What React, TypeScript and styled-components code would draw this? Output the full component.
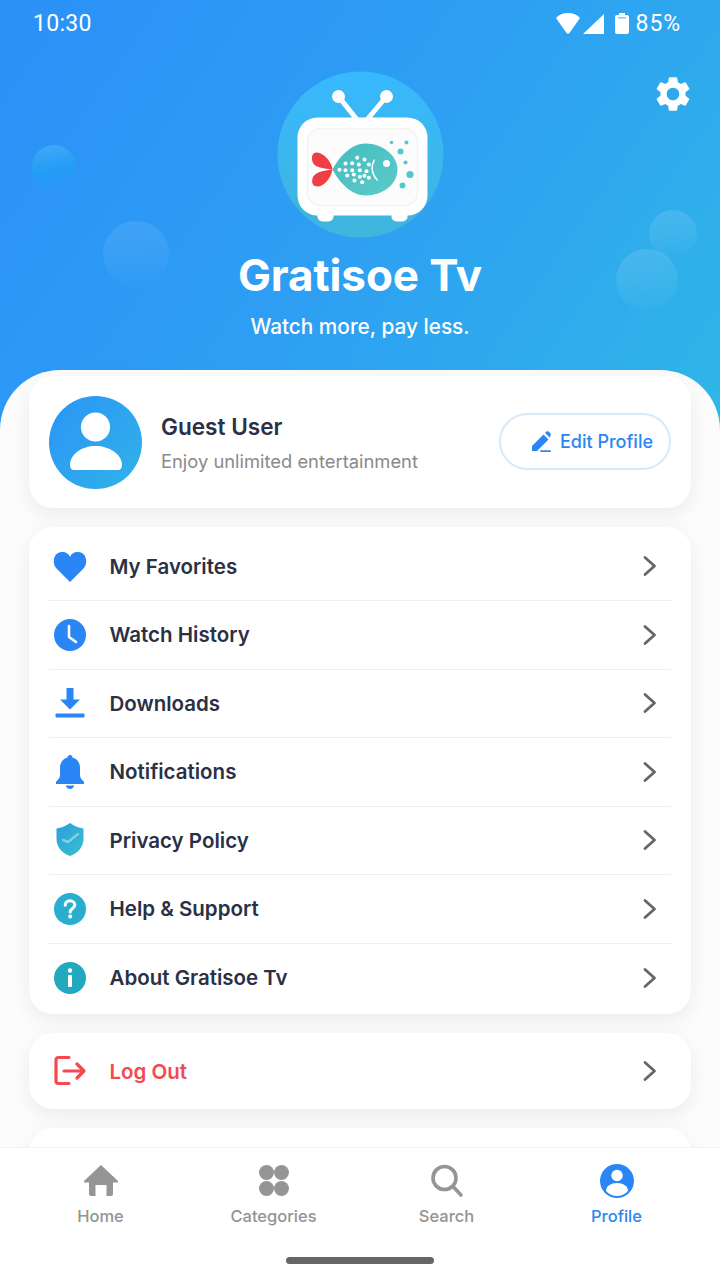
import React from "react";
import styled, { createGlobalStyle } from "styled-components";
import { MdSettings } from "react-icons/md";

const Global = createGlobalStyle`
  html, body { margin: 0; padding: 0; background: #fff; }
  * { box-sizing: border-box; }
`;

const Page = styled.div`
  width: 720px;
  height: 1280px;
  display: flex;
  flex-direction: column;
  overflow: hidden;
  background: #fcfcfc;
  font-family: Inter, "Liberation Sans", sans-serif;
`;

const Scroll = styled.main`
  flex: 1;
  min-height: 0;
  overflow: hidden;
`;

const Hero = styled.header`
  position: relative;
  height: 430px;
  display: flex;
  flex-direction: column;
  align-items: center;
  overflow: hidden;
  color: #fff;
  background: linear-gradient(125deg, #2b90f8 0%, #2e9ff3 50%, #2fb6e7 100%);
`;

const StatusBar = styled.div`
  width: 100%;
  height: 47px;
  padding: 0 39px 0 33px;
  display: flex;
  align-items: center;
  justify-content: space-between;
  font-family: Roboto, sans-serif;
  font-size: 23px;
  letter-spacing: 0.3px;
`;

const StatusIcons = styled.div`
  display: flex;
  align-items: center;
  gap: 3px;
`;

const Battery = styled.svg`
  margin: 0 4px 0 8px;
`;

const BatteryLevel = styled.span`
  letter-spacing: 0.9px;
`;

const Bubble = styled.span<{ $x: number; $y: number; $r: number; $a: number }>`
  position: absolute;
  left: ${(p) => p.$x - p.$r}px;
  top: ${(p) => p.$y - p.$r}px;
  width: ${(p) => p.$r * 2}px;
  height: ${(p) => p.$r * 2}px;
  border-radius: 50%;
  background: linear-gradient(170deg, rgba(255, 255, 255, ${(p) => p.$a}) 0%, rgba(255, 255, 255, ${(p) => p.$a * 0.6}) 50%, rgba(255, 255, 255, 0) 100%);
`;

const DarkBubble = styled(Bubble)`
  background: linear-gradient(170deg, rgba(90, 185, 250, 0.55) 0%, rgba(30, 160, 245, 0.7) 55%, rgba(30, 155, 245, 0) 100%);
`;

const GearButton = styled.div`
  position: absolute;
  left: 652px;
  top: 73px;
  width: 42px;
  height: 42px;
  color: #fff;
`;

const Logo = styled.svg`
  position: relative;
  margin-top: 24px;
  display: block;
  flex: none;
`;

const Title = styled.h1`
  position: relative;
  margin: 9px 0 0;
  font-size: 44px;
  line-height: 56px;
  font-weight: 700;
  letter-spacing: -0.1px;
`;

const Tagline = styled.p`
  position: relative;
  margin: 11px 0 0;
  font-size: 20.8px;
  line-height: 26px;
  font-weight: 500;
`;

const Sheet = styled.section`
  position: relative;
  margin-top: -60px;
  padding: 6px 29px 0;
  display: flex;
  flex-direction: column;
  gap: 19px;
  background: #fcfcfc;
  border-radius: 60px 60px 0 0;
`;

const Card = styled.div`
  background: #fff;
  border-radius: 24px;
  box-shadow: 0 6px 20px rgba(0, 0, 0, 0.07);
`;

const ProfileCard = styled(Card)`
  height: 132px;
  padding: 0 20px;
  display: flex;
  align-items: center;
`;

const Avatar = styled.div`
  width: 93px;
  height: 93px;
  flex: none;
  border-radius: 50%;
  background: linear-gradient(130deg, #2b95f6, #31b2e8);
`;

const ProfileText = styled.div`
  margin-left: 19px;
  flex: 1;
`;

const ProfileName = styled.div`
  font-size: 22.6px;
  line-height: 30px;
  font-weight: 600;
  color: #2a3045;
`;

const ProfileSub = styled.div`
  margin-top: 7px;
  font-size: 18.35px;
  line-height: 24px;
  color: #8a8a8a;
`;

const EditButton = styled.button`
  width: 172px;
  height: 57px;
  margin-top: -1px;
  padding: 0 0 0 30px;
  display: flex;
  align-items: center;
  gap: 7px;
  background: #fff;
  border: 2px solid #d6eafb;
  border-radius: 29px;
  color: #2a86f5;
  font-family: inherit;
  font-size: 18px;
  font-weight: 500;
`;

const MenuCard = styled(Card)`
  padding: 5.5px 20px 2px;
`;

const Row = styled.div`
  height: 68.5px;
  padding: 0 14px 0 3px;
  display: flex;
  align-items: center;
  gap: 21.5px;
  border-bottom: 1.5px solid #eeeeee;
  &:last-child {
    border-bottom: none;
  }
`;

const RowLabel = styled.span<{ $danger?: boolean }>`
  flex: 1;
  font-size: 20.5px;
  font-weight: 600;
  color: ${(p) => (p.$danger ? "#f5484f" : "#2a3045")};
`;

const LogoutCard = styled(Card)`
  height: 76px;
  padding: 0 20px;
  display: flex;
  align-items: center;
`;

const LogoutRow = styled(Row)`
  flex: 1;
  height: 76px;
  border-bottom: none;
`;

const GhostCard = styled(Card)`
  height: 100px;
`;

const Nav = styled.nav`
  position: relative;
  flex: none;
  height: 133px;
  background: #fff;
  border-top: 1px solid #f3f3f3;
`;

const NavItems = styled.div`
  height: 92px;
  padding: 15px 0 0;
  display: flex;
`;

const NavItem = styled.div<{ $active?: boolean; $w: number }>`
  width: ${(p) => p.$w}px;
  display: flex;
  flex-direction: column;
  align-items: center;
  gap: 6px;
  font-size: 16.5px;
  line-height: 22px;
  font-weight: 500;
  color: ${(p) => (p.$active ? "#2a86f5" : "#939393")};
`;

const HomeBarWrap = styled.div`
  display: flex;
  justify-content: center;
  padding-top: 17px;
`;

const HomeBar = styled.div`
  width: 148px;
  height: 7px;
  border-radius: 3.5px;
  background: #666;
`;

const BLUE = "#2a86f5";

const HeartIcon = () => (
  <svg width="36" height="36" viewBox="0 0 36 36">
    <path fill={BLUE} d="M18 34 L4.5 20.5 C-0.5 15 1.5 4 10 4 C14 4 17 6 18 9 C19 6 22 4 26 4 C34.5 4 36.5 15 31.5 20.5 Z" />
  </svg>
);
const ClockIcon = () => (
  <svg width="36" height="36" viewBox="0 0 36 36">
    <circle cx="18" cy="18" r="16" fill={BLUE} />
    <path d="M17 9 V20 L24 25" fill="none" stroke="#fff" strokeWidth="2.6" strokeLinecap="round" strokeLinejoin="round" />
  </svg>
);
const DownloadIcon = () => (
  <svg width="36" height="36" viewBox="0 0 36 36">
    <path fill={BLUE} d="M14.5 3 H21.5 V14.5 H28 L18 24.5 L8 14.5 H14.5 Z" />
    <rect x="3.5" y="28.5" width="29" height="4" rx="1" fill={BLUE} />
  </svg>
);
const BellIcon = () => (
  <svg width="36" height="36" viewBox="0 0 36 36">
    <path fill={BLUE} d="M18 1 C16.5 1 15.5 2 15.5 3.5 C10 5 8 9.5 8 14 V21 C8 25 5 26 4 28 V30 H32 V28 C31 26 28 25 28 21 V14 C28 9.5 26 5 20.5 3.5 C20.5 2 19.5 1 18 1 Z" />
    <path fill={BLUE} d="M14 31.5 H22 C22 33.5 20 35 18 35 C16 35 14 33.5 14 31.5 Z" />
  </svg>
);
const ShieldIcon = () => (
  <svg width="36" height="36" viewBox="0 0 36 36">
    <defs>
      <linearGradient id="shield" x1="0" y1="0" x2="1" y2="1">
        <stop offset="0" stopColor="#2a9fdc" />
        <stop offset="1" stopColor="#39bfd0" />
      </linearGradient>
    </defs>
    <path fill="url(#shield)" d="M18 1 C14 4 9 6 4.5 6.5 V17 C4.5 25 10 31 18 34 C26 31 31.5 25 31.5 17 V6.5 C27 6 22 4 18 1 Z" />
    <path d="M11 18 L16 20 L26 12" fill="none" stroke="rgba(255,255,255,.4)" strokeWidth="2.5" strokeLinecap="round" strokeLinejoin="round" />
  </svg>
);
const HelpIcon = () => (
  <svg width="36" height="36" viewBox="0 0 36 36">
    <circle cx="18" cy="18" r="16" fill="#2aaed0" />
    <path d="M13.2 14.2 C13.2 11.4 15.4 9.8 18 9.8 C20.8 9.8 22.8 11.6 22.8 14 C22.8 17.4 18.2 17.6 18.2 21" fill="none" stroke="#fff" strokeWidth="3" strokeLinecap="round" />
    <circle cx="18.2" cy="25.6" r="2" fill="#fff" />
  </svg>
);
const InfoIcon = () => (
  <svg width="36" height="36" viewBox="0 0 36 36">
    <circle cx="18" cy="18" r="16" fill="#22a9c0" />
    <circle cx="18" cy="10.5" r="2.2" fill="#fff" />
    <rect x="16" y="15" width="4" height="12" rx="1" fill="#fff" />
  </svg>
);
const LogoutIcon = () => (
  <svg width="36" height="36" viewBox="0 0 36 36" fill="none" stroke="#f5484f" strokeWidth="3.2" strokeLinecap="round" strokeLinejoin="round">
    <path d="M17 4.5 H6.5 A2.5 2.5 0 0 0 4 7 V28 A2.5 2.5 0 0 0 6.5 30.5 H17" />
    <path d="M12 18 H32 M25 11 L32 18 L25 25" />
  </svg>
);
const Chevron = () => (
  <svg width="14" height="22" viewBox="0 0 14 22" fill="none" stroke="#666" strokeWidth="2.8" strokeLinecap="round" strokeLinejoin="round">
    <path d="M2 2.5 L11.5 11 L2 19.5" />
  </svg>
);

const menu: { label: string; icon: React.ReactNode }[] = [
  { label: "My Favorites", icon: <HeartIcon /> },
  { label: "Watch History", icon: <ClockIcon /> },
  { label: "Downloads", icon: <DownloadIcon /> },
  { label: "Notifications", icon: <BellIcon /> },
  { label: "Privacy Policy", icon: <ShieldIcon /> },
  { label: "Help & Support", icon: <HelpIcon /> },
  { label: "About Gratisoe Tv", icon: <InfoIcon /> },
];

const fishDots = [
  [350, 295], [372, 300], [335, 311], [315, 312], [355, 315], [385, 315], [335, 332], [315, 332], [297, 331],
  [358, 332], [378, 335], [340, 345], [320, 348], [358, 352], [385, 355], [372, 349], [342, 363], [365, 368],
];

const LogoArt = () => (
  <Logo width="167" height="167" viewBox="36.5 11.5 167 167">
    <defs>
      <linearGradient id="disc" x1="0" y1="0" x2="0" y2="1">
        <stop offset="0" stopColor="#38b9ff" />
        <stop offset="1" stopColor="#3fb5dc" />
      </linearGradient>
      <linearGradient id="fish" x1="0" y1="0" x2="1" y2="1">
        <stop offset="0" stopColor="#45bdbf" />
        <stop offset="1" stopColor="#5ccaca" />
      </linearGradient>
    </defs>
    <circle cx="120" cy="95" r="83" fill="url(#disc)" />
    <path d="M98 37 L118 62 M146 37 L125 62" stroke="#fff" strokeWidth="5" strokeLinecap="round" />
    <circle cx="98" cy="37" r="6.5" fill="#fff" />
    <circle cx="146" cy="37" r="6.5" fill="#fff" />
    <rect x="77" y="148" width="16" height="14" rx="5" fill="#fff" />
    <rect x="151" y="148" width="16" height="14" rx="5" fill="#fff" />
    <rect x="57" y="58" width="130" height="98" rx="20" fill="#fff" />
    <rect x="67" y="69" width="110" height="77" rx="13" fill="#fcfcfc" stroke="#f3f3f3" strokeWidth="1.5" />
    <path fill="#ee3f45" d="M92 109.5 C90 100 82 93 76 93 C71 93 71 99 72 102 C73 107 80 109 92 110 C80 111 73 114 72 119 C71 123 72 127 77 127 C83 127 90 120 92 110 Z" />
    <path fill="url(#fish)" d="M92 110 C100 95 112 84 125 84 C143 84 157 97 157 110 C157 124 143 136 125 136 C112 136 100 125 92 110 Z" />
    {fishDots.map(([x, y], i) => (
      <circle key={i} cx={x / 3} cy={y / 3} r="2" fill="#fff" />
    ))}
    <path d="M134 100 Q128 111 137 121" fill="none" stroke="#fff" strokeWidth="1.4" />
    <circle cx="146" cy="104" r="3.5" fill="#fff" />
    <circle cx="151" cy="83" r="1.8" fill="#4fc8d4" />
    <circle cx="166" cy="83" r="2" fill="#4fc8d4" />
    <circle cx="160" cy="92" r="3" fill="#4fc8d4" />
    <circle cx="165" cy="103" r="2" fill="#4fc8d4" />
    <circle cx="169.5" cy="115" r="3.6" fill="#4fc8d4" />
    <circle cx="162" cy="126" r="2.9" fill="#4fc8d4" />
  </Logo>
);

export default function App() {
  return (
    <Page>
      <Global />
      <Scroll>
        <Hero>
          <DarkBubble $x={54} $y={167} $r={22} $a={0.1} />
          <Bubble $x={136} $y={254} $r={33} $a={0.1} />
          <Bubble $x={647} $y={280} $r={31} $a={0.13} />
          <Bubble $x={673} $y={234} $r={24} $a={0.13} />
          <StatusBar>
            <span>10:30</span>
            <StatusIcons>
              <svg width="24" height="21" viewBox="0 0 24 21">
                <path fill="#fff" d="M12 0 C7 0 3 1.5 0 5 L10.5 20 Q12 21.5 13.5 20 L24 5 C21 1.5 17 0 12 0 Z" />
              </svg>
              <svg width="21" height="20" viewBox="0 0 21 20">
                <path fill="#fff" d="M21 0 V20 H0 Z" />
              </svg>
              <Battery width="14" height="21" viewBox="0 0 14 21">
                <path fill="#fff" d="M4 0 H10 V2 H12 Q14 2 14 4 V19 Q14 21 12 21 H2 Q0 21 0 19 V4 Q0 2 2 2 H4 Z" />
                <rect x="3" y="4" width="8" height="1.6" fill="#8fcdf5" />
              </Battery>
              <BatteryLevel>85%</BatteryLevel>
            </StatusIcons>
          </StatusBar>
          <GearButton>
            <MdSettings size={42} />
          </GearButton>
          <LogoArt />
          <Title>Gratisoe Tv</Title>
          <Tagline>Watch more, pay less.</Tagline>
        </Hero>
        <Sheet>
          <ProfileCard>
            <Avatar>
              <svg width="93" height="93" viewBox="0 0 93 93">
                <circle cx="46.5" cy="31" r="14.6" fill="#fff" />
                <path fill="#fff" d="M21 69 C21 58 33 50 46.5 50 C60 50 73 58 73 69 C73 72 71.5 74 69 74 H25 C22.5 74 21 72 21 69 Z" />
              </svg>
            </Avatar>
            <ProfileText>
              <ProfileName>Guest User</ProfileName>
              <ProfileSub>Enjoy unlimited entertainment</ProfileSub>
            </ProfileText>
            <EditButton>
              <svg width="22" height="22" viewBox="0 0 22 22">
                <path fill={BLUE} d="M1 15 L12.5 3.5 L17.5 8.5 L6 20 H1 Z M14 2 L15.5 0.5 Q16.5 -0.2 17.5 0.5 L19.5 2.5 Q20.2 3.5 19.5 4.5 L19 6.8 Z" />
                <rect x="9" y="19.2" width="11" height="1.8" rx="0.9" fill={BLUE} />
              </svg>
              Edit Profile
            </EditButton>
          </ProfileCard>
          <MenuCard>
            {menu.map((m) => (
              <Row key={m.label}>
                {m.icon}
                <RowLabel>{m.label}</RowLabel>
                <Chevron />
              </Row>
            ))}
          </MenuCard>
          <LogoutCard>
            <LogoutRow>
              <LogoutIcon />
              <RowLabel $danger>Log Out</RowLabel>
              <Chevron />
            </LogoutRow>
          </LogoutCard>
          <GhostCard />
        </Sheet>
      </Scroll>
      <Nav>
        <NavItems>
          <NavItem $w={201}>
            <svg width="36" height="36" viewBox="0 0 36 36">
              <path fill="#959595" d="M18 2 L35 18 Q35.5 19.5 34 19.5 H30 V31 Q30 33 28 33 H23.5 V22 H12.5 V33 H8 Q6 33 6 31 V19.5 H2 Q0.5 19.5 1 18 Z" />
            </svg>
            Home
          </NavItem>
          <NavItem $w={145}>
            <svg width="36" height="36" viewBox="0 0 36 36" fill="#959595">
              <circle cx="10.5" cy="9.5" r="7.5" />
              <circle cx="25.5" cy="9.5" r="7.5" />
              <circle cx="10.5" cy="25.5" r="7.5" />
              <circle cx="25.5" cy="25.5" r="7.5" />
            </svg>
            Categories
          </NavItem>
          <NavItem $w={201}>
            <svg width="36" height="36" viewBox="0 0 36 36" fill="none" stroke="#959595" strokeWidth="3.6" strokeLinecap="round">
              <circle cx="15.5" cy="15" r="11.5" />
              <path d="M24 23.5 L32 32" />
            </svg>
            Search
          </NavItem>
          <NavItem $active $w={139}>
            <svg width="36" height="36" viewBox="0 0 36 36">
              <circle cx="18" cy="18" r="17" fill={BLUE} />
              <circle cx="18" cy="12.5" r="5.7" fill="#fff" />
              <path fill="#fff" d="M7 28 C7 23 12 20 18 20 C24 20 29 23 29 28 C26 31.5 22 33 18 33 C14 33 10 31.5 7 28 Z" />
            </svg>
            Profile
          </NavItem>
        </NavItems>
        <HomeBarWrap>
          <HomeBar />
        </HomeBarWrap>
      </Nav>
    </Page>
  );
}
